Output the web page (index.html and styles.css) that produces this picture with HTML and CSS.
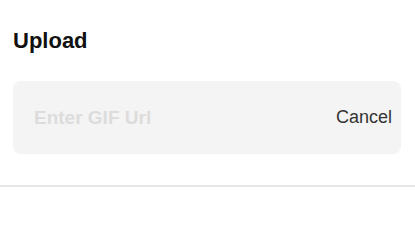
FILE: index.html
```html
<!DOCTYPE html>
<html>
<head>
<meta charset="utf-8">
<link rel="stylesheet" href="styles.css">
</head>
<body>
<div class="panel">
  <h1 class="title">Upload</h1>
  <div class="field">
    <input class="url-input" type="text" placeholder="Enter GIF Url">
    <button class="cancel" type="button">Cancel</button>
  </div>
</div>
<div class="divider"></div>
</body>
</html>
```
FILE: styles.css
```css
html, body {
  margin: 0;
  padding: 0;
  background: #ffffff;
}
body {
  font-family: "Liberation Sans", Arial, sans-serif;
  width: 415px;
  height: 200px;
  overflow: hidden;
}
.panel {
  padding: 28px 14px 0 13px;
}
.title {
  margin: 0;
  font-size: 22px;
  line-height: 25px;
  font-weight: 700;
  color: #111111;
}
.field {
  margin-top: 28px;
  height: 73px;
  background: #f4f4f4;
  border-radius: 8px;
  display: flex;
  align-items: center;
  padding: 0 9px 0 21px;
}
.url-input {
  flex: 1;
  border: none;
  outline: none;
  background: transparent;
  font-family: "Liberation Sans", Arial, sans-serif;
  font-size: 19px;
  font-weight: 700;
  color: #333333;
  padding: 0;
  margin: 0;
  min-width: 0;
}
.url-input::placeholder {
  color: #dcdcdc;
}
.cancel {
  border: none;
  background: transparent;
  font-family: "Liberation Sans", Arial, sans-serif;
  font-size: 18px;
  color: #333333;
  padding: 0;
  margin: 0;
}
.divider {
  margin-top: 31px;
  height: 2px;
  background: #e6e6e6;
}
```
